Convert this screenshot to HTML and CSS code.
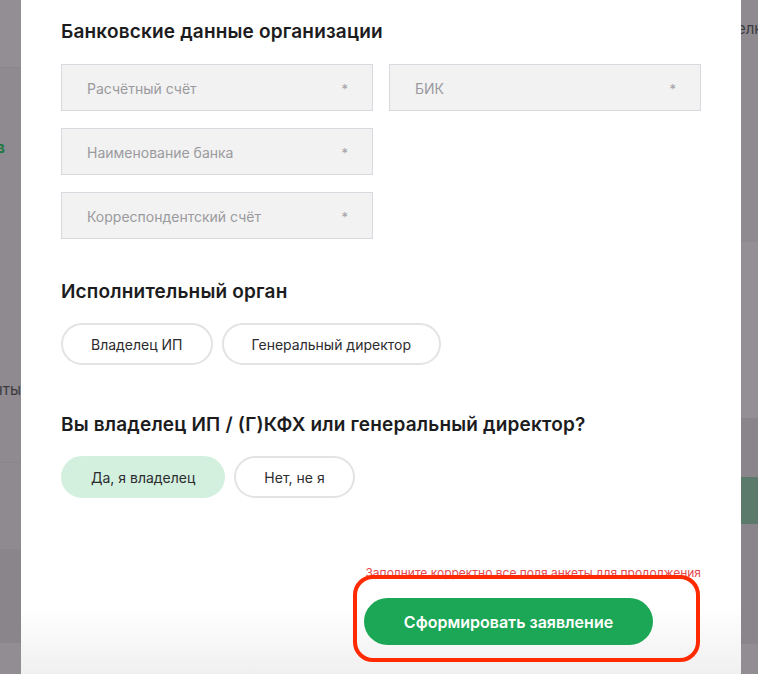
FILE: index.html
```html
<!DOCTYPE html>
<html lang="ru">
<head>
<meta charset="utf-8">
<title>Банковские данные</title>
<link rel="stylesheet" href="styles.css">
</head>
<body>
<div class="screen">
  <aside class="strip strip-left">
    <div class="band band-top"></div>
    <div class="band band-mid">
      <span class="peek peek-green">в</span>
      <span class="peek peek-dark">нты</span>
    </div>
    <div class="band band-low"></div>
    <div class="band band-dark"></div>
    <div class="band band-bottom"></div>
  </aside>

  <main class="modal">
    <section class="block">
      <h2 class="heading">Банковские данные организации</h2>
      <div class="fields">
        <div class="field"><span>Расчётный счёт</span><span class="req">*</span></div>
        <div class="field"><span>БИК</span><span class="req">*</span></div>
        <div class="field"><span>Наименование банка</span><span class="req">*</span></div>
        <div class="spacer"></div>
        <div class="field"><span>Корреспондентский счёт</span><span class="req">*</span></div>
      </div>
    </section>

    <section class="block block-exec">
      <h2 class="heading">Исполнительный орган</h2>
      <div class="chips">
        <button class="chip">Владелец ИП</button>
        <button class="chip">Генеральный директор</button>
      </div>
    </section>

    <section class="block block-owner">
      <h2 class="heading">Вы владелец ИП / (Г)КФХ или генеральный директор?</h2>
      <div class="chips">
        <button class="chip chip-active">Да, я владелец</button>
        <button class="chip">Нет, не я</button>
      </div>
    </section>

    <footer class="footer">
      <p class="error">Заполните корректно все поля анкеты для продолжения</p>
      <div class="submit-wrap">
        <button class="submit">Сформировать заявление</button>
        <div class="highlight"></div>
      </div>
    </footer>
  </main>

  <aside class="strip strip-right">
    <div class="rband rband-top"><span class="peek peek-dark">елк</span></div>
    <div class="rband rband-light"></div>
    <div class="rband rband-a"></div>
    <div class="rband rband-green"></div>
    <div class="rband rband-dark"></div>
    <div class="rband rband-bottom"></div>
  </aside>
</div>
</body>
</html>
```

FILE: styles.css
```css
* { box-sizing: border-box; }

html, body {
  margin: 0;
  padding: 0;
  height: 674px;
  overflow: hidden;
  background: #8e898f;
  font-family: Inter, "Noto Sans", "Liberation Sans", sans-serif;
}

.screen {
  display: flex;
  width: 758px;
  height: 674px;
}

.strip {
  display: flex;
  flex-direction: column;
  overflow: hidden;
  position: relative;
}

.strip-left { width: 21px; }
.strip-right { width: 17px; }

.band, .rband { flex: none; position: relative; }

.band-top { height: 68px; background: #938e94; border-bottom: 1px solid #8a858b; }
.band-mid { height: 395px; background: #8f8a90; border-bottom: 1px solid #8a858b; }
.band-low { height: 86px; background: #8f8a90; }
.band-dark { height: 94px; background: #8a858b; }
.band-bottom { flex: 1; background: #928d93; }

.peek {
  position: absolute;
  font-size: 15px;
  white-space: nowrap;
}
.peek-green { top: 70px; right: 16px; color: #1d7a45; font-weight: 700; }
.peek-dark { color: #3a3a3e; }
.strip-left .peek-dark { top: 312px; right: 0; }
.strip-right .peek-dark { top: 19px; left: -4px; }

.rband-top { height: 242px; background: #8f8a90; }
.rband-light { height: 176px; background: #948f95; }
.rband-a { height: 59px; background: #8a858b; }
.rband-green { height: 47px; background: #5b7a6b; }
.rband-dark { height: 120px; background: #8a858b; }
.rband-bottom { flex: 1; background: #928d93; }

.modal {
  width: 720px;
  height: 674px;
  background: #fff;
  padding: 20px 40px 0;
  display: flex;
  flex-direction: column;
}

.heading {
  margin: 0;
  font-size: 19px;
  line-height: 24px;
  font-weight: 600;
  color: #1c1c1e;
  letter-spacing: 0.18px;
}

.fields {
  margin-top: 20px;
  display: grid;
  grid-template-columns: 312px 312px;
  column-gap: 16px;
  row-gap: 17px;
}

.field {
  height: 47px;
  background: #f2f2f2;
  border: 1px solid #d8d9de;
  display: flex;
  align-items: center;
  justify-content: space-between;
  padding: 2px 24px 0 25px;
  font-size: 14px;
  color: #9a9a9e;
}

.req { font-size: 13px; color: #a0a0a4; }

.block-exec { margin-top: 41px; }
.block-owner { margin-top: 48px; }

.chips {
  margin-top: 19px;
  display: flex;
  gap: 9px;
}

.chip {
  height: 42px;
  padding: 0 28px;
  border: 2px solid #e3e3e3;
  border-radius: 21px;
  background: #fff;
  font-family: inherit;
  font-size: 14px;
  color: #2c2c2e;
}

.chip-active {
  background: #d3f0df;
  border-color: #d3f0df;
}

.footer {
  margin: auto -40px 0;
  padding: 0 40px 29px;
  background: linear-gradient(to bottom, #fff 0, #fff 40px, #f0f0f0 100%);
  display: flex;
  flex-direction: column;
  align-items: flex-end;
}

.error {
  margin: 0;
  font-size: 12px;
  line-height: 14px;
  color: #e5484d;
}

.submit-wrap {
  position: relative;
  margin-top: 18px;
  margin-right: 48px;
}

.submit {
  width: 289px;
  height: 47px;
  border: 0;
  border-radius: 24px;
  background: #1ca756;
  color: #fff;
  font-family: inherit;
  font-size: 16px;
  font-weight: 600;
}

.highlight {
  position: absolute;
  left: -11px;
  top: -23px;
  width: 347px;
  height: 87px;
  border: 4px solid #ff2a00;
  border-radius: 20px;
  pointer-events: none;
}
```
